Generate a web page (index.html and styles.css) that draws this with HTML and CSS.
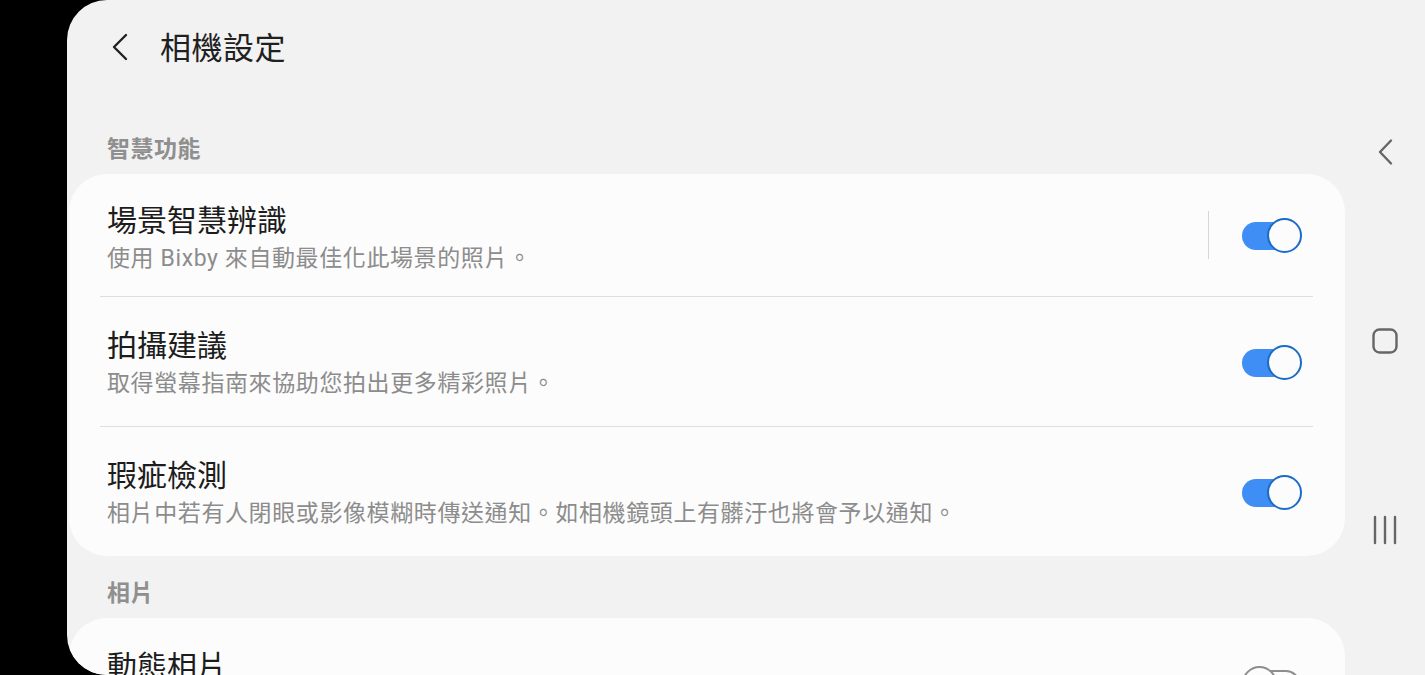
FILE: index.html
```html
<!DOCTYPE html>
<html lang="zh-Hant">
<head>
  <meta charset="UTF-8">
  <title>相機設定</title>
  <meta name="viewport" content="width=device-width, initial-scale=1">
  <link rel="stylesheet" href="styles.css">
</head>
<body>
  <div class="screen">
    <div class="main">
      <!-- barra del titolo -->
      <div class="topbar">
        <svg class="back" width="24" height="30" viewBox="0 0 24 30">
          <path d="M18 3 L6 15 L18 27" fill="none" stroke="#222" stroke-width="2.4" stroke-linecap="round" stroke-linejoin="round"/>
        </svg>
        <span class="page-title">相機設定</span>
      </div>

      <div class="section-title first">智慧功能</div>
      <div class="card">
        <div class="row top">
          <div class="text">
            <div class="row-title">場景智慧辨識</div>
            <div class="row-sub">使用 Bixby 來自動最佳化此場景的照片。</div>
          </div>
          <div class="vsep"></div>
          <div class="toggle on"><span class="track"></span><span class="thumb"></span></div>
        </div>
        <div class="divider"></div>
        <div class="row">
          <div class="text">
            <div class="row-title">拍攝建議</div>
            <div class="row-sub">取得螢幕指南來協助您拍出更多精彩照片。</div>
          </div>
          <div class="toggle on"><span class="track"></span><span class="thumb"></span></div>
        </div>
        <div class="divider"></div>
        <div class="row">
          <div class="text">
            <div class="row-title">瑕疵檢測</div>
            <div class="row-sub">相片中若有人閉眼或影像模糊時傳送通知。如相機鏡頭上有髒汙也將會予以通知。</div>
          </div>
          <div class="toggle on"><span class="track"></span><span class="thumb"></span></div>
        </div>
      </div>

      <div class="section-title">相片</div>
      <div class="card">
        <div class="row">
          <div class="text">
            <div class="row-title">動態相片</div>
            <div class="row-sub">拍攝相片前先錄製短片。</div>
          </div>
          <div class="toggle off"><span class="track"></span><span class="thumb"></span></div>
        </div>
      </div>
    </div>

    <!-- barra di navigazione -->
    <div class="nav">
      <svg width="40" height="40" viewBox="0 0 40 40">
        <path d="M26 8.5 L15 20 L26 31.5" fill="none" stroke="#666" stroke-width="2.4" stroke-linecap="round" stroke-linejoin="round"/>
      </svg>
      <svg width="40" height="40" viewBox="0 0 40 40">
        <rect x="8.5" y="8.5" width="23" height="23" rx="6" fill="none" stroke="#666" stroke-width="2.4"/>
      </svg>
      <svg width="40" height="40" viewBox="0 0 40 40">
        <path d="M10 7 V33 M20 7 V33 M30 7 V33" fill="none" stroke="#666" stroke-width="2.4" stroke-linecap="round"/>
      </svg>
    </div>
  </div>
</body>
</html>
```

FILE: styles.css
```css
body {
  margin: 0;
  background: #000;
  width: 1425px;
  height: 675px;
  overflow: hidden;
  font-family: Roboto, "Noto Sans CJK TC", sans-serif;
}

.screen {
  margin-left: 67px;
  height: 675px;
  display: flex;
  background: #f2f2f2;
  border-radius: 40px 0 0 40px;
  overflow: hidden;
}

.main {
  flex: 1;
  padding-left: 2px;
}

.topbar {
  height: 94px;
  display: flex;
  align-items: center;
  padding-left: 39px;
}

.back {
  margin-right: 28px;
}

.page-title {
  font-size: 31px;
  letter-spacing: 0.5px;
  color: #202020;
  padding-bottom: 3px;
}

.section-title {
  padding: 23px 38px 9px;
  line-height: 30px;
  font-size: 23px;
  letter-spacing: 0.5px;
  font-weight: bold;
  color: #8f8f8f;
}

.section-title.first {
  padding-top: 41px;
}

.card {
  background: #fcfcfc;
  border-radius: 38px;
}

.row {
  display: flex;
  align-items: center;
  padding: 30px 43px 27px 38px;
}

.row.top {
  padding-top: 28px;
  padding-bottom: 22px;
}

/* interruttore e separatore centrati sulla riga intera */
.row.top .toggle,
.row.top .vsep {
  margin-top: -6px;
}

.text {
  flex: 1;
}

.row-title {
  font-size: 30px;
  line-height: 38px;
  color: #1c1c1c;
}

.row-sub {
  margin-top: 4px;
  font-size: 23px;
  line-height: 30px;
  color: #8c8c8c;
  letter-spacing: 0.6px;
}

.divider {
  height: 1px;
  margin: 0 32px 0 31px;
  background: #dedede;
}

.vsep {
  width: 1px;
  height: 48px;
  background: #d6d6d6;
  margin-right: 33px;
}

.toggle {
  position: relative;
  width: 60px;
  height: 34px;
  margin-top: -3px;
}

.track {
  position: absolute;
  left: 0;
  top: 4px;
  width: 50px;
  height: 28px;
  box-sizing: border-box;
  border-radius: 14px;
}

.thumb {
  position: absolute;
  top: 0;
  width: 35px;
  height: 35px;
  box-sizing: border-box;
  border-radius: 50%;
  background: #fcfcfc;
}

.toggle.on .track {
  background: #3f8ef6;
}

.toggle.on .thumb {
  right: 0;
  border: 2px solid #1b6cc6;
}

.toggle.off .track {
  left: 8px;
  border: 2px solid #8e8e8e;
}

.toggle.off .thumb {
  left: 0;
  border: 2px solid #8e8e8e;
}

.nav {
  width: 80px;
  display: flex;
  flex-direction: column;
  align-items: center;
  padding-top: 132px;
  gap: 149px;
}
```
